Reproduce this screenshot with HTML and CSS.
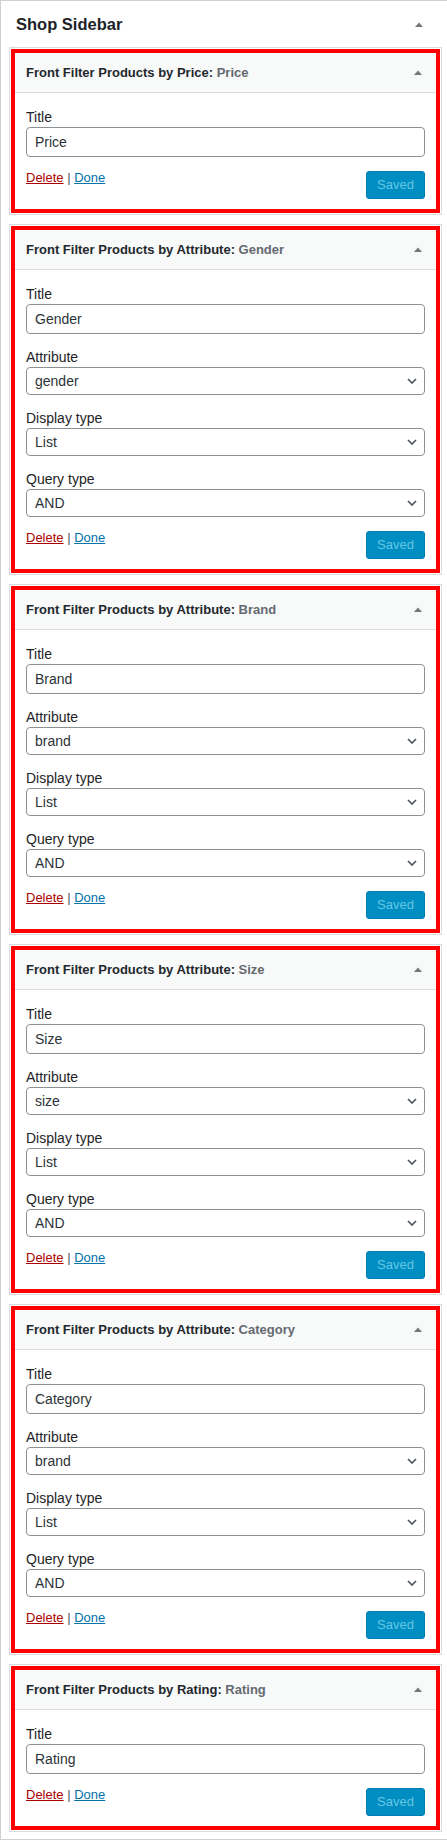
FILE: index.html
```html
<!DOCTYPE html>
<html lang="en">
<head>
<meta charset="utf-8">
<title>Shop Sidebar</title>
<link rel="stylesheet" href="styles.css">
</head>
<body>
<div class="panel">
  <div class="panel-head">
    <h2 class="panel-title">Shop Sidebar</h2>
    <svg class="tri" width="8" height="5" viewBox="0 0 8 5"><polygon points="0,5 4,0.4 8,5"/></svg>
  </div>
  <div class="widgets">

    <div class="widget"><div class="hl">
      <div class="w-top"><h3 class="w-title">Front Filter Products by Price: <span class="sub">Price</span></h3><svg class="tri" width="8" height="5" viewBox="0 0 8 5"><polygon points="0,5 4,0.4 8,5"/></svg></div>
      <div class="w-inside">
        <div class="field"><div class="label">Title</div><div class="input">Price</div></div>
        <div class="actions"><div class="links"><span class="del">Delete</span> | <span class="done">Done</span></div><div class="saved">Saved</div></div>
      </div>
    </div></div>

    <div class="widget"><div class="hl">
      <div class="w-top"><h3 class="w-title">Front Filter Products by Attribute: <span class="sub">Gender</span></h3><svg class="tri" width="8" height="5" viewBox="0 0 8 5"><polygon points="0,5 4,0.4 8,5"/></svg></div>
      <div class="w-inside">
        <div class="field"><div class="label">Title</div><div class="input">Gender</div></div>
        <div class="field"><div class="label">Attribute</div><div class="select"><span>gender</span><svg class="chev" width="10" height="6" viewBox="0 0 10 6"><polyline points="1,1 5,5 9,1"/></svg></div></div>
        <div class="field"><div class="label">Display type</div><div class="select"><span>List</span><svg class="chev" width="10" height="6" viewBox="0 0 10 6"><polyline points="1,1 5,5 9,1"/></svg></div></div>
        <div class="field"><div class="label">Query type</div><div class="select"><span>AND</span><svg class="chev" width="10" height="6" viewBox="0 0 10 6"><polyline points="1,1 5,5 9,1"/></svg></div></div>
        <div class="actions"><div class="links"><span class="del">Delete</span> | <span class="done">Done</span></div><div class="saved">Saved</div></div>
      </div>
    </div></div>

    <div class="widget"><div class="hl">
      <div class="w-top"><h3 class="w-title">Front Filter Products by Attribute: <span class="sub">Brand</span></h3><svg class="tri" width="8" height="5" viewBox="0 0 8 5"><polygon points="0,5 4,0.4 8,5"/></svg></div>
      <div class="w-inside">
        <div class="field"><div class="label">Title</div><div class="input">Brand</div></div>
        <div class="field"><div class="label">Attribute</div><div class="select"><span>brand</span><svg class="chev" width="10" height="6" viewBox="0 0 10 6"><polyline points="1,1 5,5 9,1"/></svg></div></div>
        <div class="field"><div class="label">Display type</div><div class="select"><span>List</span><svg class="chev" width="10" height="6" viewBox="0 0 10 6"><polyline points="1,1 5,5 9,1"/></svg></div></div>
        <div class="field"><div class="label">Query type</div><div class="select"><span>AND</span><svg class="chev" width="10" height="6" viewBox="0 0 10 6"><polyline points="1,1 5,5 9,1"/></svg></div></div>
        <div class="actions"><div class="links"><span class="del">Delete</span> | <span class="done">Done</span></div><div class="saved">Saved</div></div>
      </div>
    </div></div>

    <div class="widget"><div class="hl">
      <div class="w-top"><h3 class="w-title">Front Filter Products by Attribute: <span class="sub">Size</span></h3><svg class="tri" width="8" height="5" viewBox="0 0 8 5"><polygon points="0,5 4,0.4 8,5"/></svg></div>
      <div class="w-inside">
        <div class="field"><div class="label">Title</div><div class="input">Size</div></div>
        <div class="field"><div class="label">Attribute</div><div class="select"><span>size</span><svg class="chev" width="10" height="6" viewBox="0 0 10 6"><polyline points="1,1 5,5 9,1"/></svg></div></div>
        <div class="field"><div class="label">Display type</div><div class="select"><span>List</span><svg class="chev" width="10" height="6" viewBox="0 0 10 6"><polyline points="1,1 5,5 9,1"/></svg></div></div>
        <div class="field"><div class="label">Query type</div><div class="select"><span>AND</span><svg class="chev" width="10" height="6" viewBox="0 0 10 6"><polyline points="1,1 5,5 9,1"/></svg></div></div>
        <div class="actions"><div class="links"><span class="del">Delete</span> | <span class="done">Done</span></div><div class="saved">Saved</div></div>
      </div>
    </div></div>

    <div class="widget"><div class="hl">
      <div class="w-top"><h3 class="w-title">Front Filter Products by Attribute: <span class="sub">Category</span></h3><svg class="tri" width="8" height="5" viewBox="0 0 8 5"><polygon points="0,5 4,0.4 8,5"/></svg></div>
      <div class="w-inside">
        <div class="field"><div class="label">Title</div><div class="input">Category</div></div>
        <div class="field"><div class="label">Attribute</div><div class="select"><span>brand</span><svg class="chev" width="10" height="6" viewBox="0 0 10 6"><polyline points="1,1 5,5 9,1"/></svg></div></div>
        <div class="field"><div class="label">Display type</div><div class="select"><span>List</span><svg class="chev" width="10" height="6" viewBox="0 0 10 6"><polyline points="1,1 5,5 9,1"/></svg></div></div>
        <div class="field"><div class="label">Query type</div><div class="select"><span>AND</span><svg class="chev" width="10" height="6" viewBox="0 0 10 6"><polyline points="1,1 5,5 9,1"/></svg></div></div>
        <div class="actions"><div class="links"><span class="del">Delete</span> | <span class="done">Done</span></div><div class="saved">Saved</div></div>
      </div>
    </div></div>

    <div class="widget"><div class="hl">
      <div class="w-top"><h3 class="w-title">Front Filter Products by Rating: <span class="sub">Rating</span></h3><svg class="tri" width="8" height="5" viewBox="0 0 8 5"><polygon points="0,5 4,0.4 8,5"/></svg></div>
      <div class="w-inside">
        <div class="field"><div class="label">Title</div><div class="input">Rating</div></div>
        <div class="actions"><div class="links"><span class="del">Delete</span> | <span class="done">Done</span></div><div class="saved">Saved</div></div>
      </div>
    </div></div>

  </div>
</div>
</body>
</html>
```

FILE: styles.css
```css
* { box-sizing: border-box; }

html, body {
  margin: 0;
  padding: 0;
  background: #ffffff;
}

body {
  font-family: "Liberation Sans", Arial, sans-serif;
  color: #1d2327;
  overflow: hidden;
}

.panel {
  border-top: 1px solid #ccd0d4;
  border-left: 1px solid #ccd0d4;
  border-bottom: 1px solid #ccd0d4;
  background: #ffffff;
}

.panel-head {
  height: 46px;
  display: flex;
  align-items: center;
  justify-content: space-between;
  padding: 0 24px 0 15px;
}

.panel-title {
  margin: 0;
  font-size: 16.5px;
  font-weight: bold;
  color: #1d2327;
}

.tri {
  display: block;
  fill: #72777c;
  flex: none;
}

.widgets {
  display: flex;
  flex-direction: column;
  gap: 9px;
  padding: 0 0 7px 8px;
}

.widget {
  width: 433px;
  border: 1px solid #dcdcde;
  padding: 1px;
  background: #ffffff;
}

.hl {
  border: 4px solid #ff0000;
  background: #ffffff;
}

.w-top {
  height: 40px;
  background: #f8f9f9;
  border-bottom: 1px solid #dcdcde;
  display: flex;
  align-items: center;
  justify-content: space-between;
  padding: 0 14px 0 11px;
}

.w-title {
  margin: 0;
  font-size: 13px;
  font-weight: bold;
  color: #23282d;
  white-space: nowrap;
}

.sub {
  color: #646970;
}

.w-inside {
  padding: 14px 11px 10px 11px;
}

.field + .field {
  margin-top: 13px;
}

.label {
  font-size: 14px;
  line-height: 20px;
  color: #1d2327;
}

.input {
  height: 30px;
  border: 1px solid #8c8f94;
  border-radius: 4px;
  padding: 0 8px;
  font-size: 14px;
  line-height: 28px;
  color: #2c3338;
  background: #ffffff;
}

.select {
  height: 28px;
  border: 1px solid #8c8f94;
  border-radius: 4px;
  padding: 0 7px 0 8px;
  font-size: 14px;
  color: #2c3338;
  background: #ffffff;
  display: flex;
  align-items: center;
  justify-content: space-between;
}

.chev {
  display: block;
  fill: none;
  stroke: #50575e;
  stroke-width: 1.7;
  flex: none;
}

.actions {
  margin-top: 12px;
  display: flex;
  align-items: flex-start;
  justify-content: space-between;
}

.links {
  font-size: 13px;
  line-height: 18px;
  color: #50575e;
}

.del {
  color: #a00;
  text-decoration: underline;
}

.done {
  color: #0073aa;
  text-decoration: underline;
}

.saved {
  margin-top: 2px;
  height: 28px;
  width: 59px;
  border-radius: 3px;
  background: #008ec2;
  border: 1px solid #007cb2;
  color: #66c6e4;
  font-size: 13px;
  line-height: 26px;
  text-align: center;
}
```
